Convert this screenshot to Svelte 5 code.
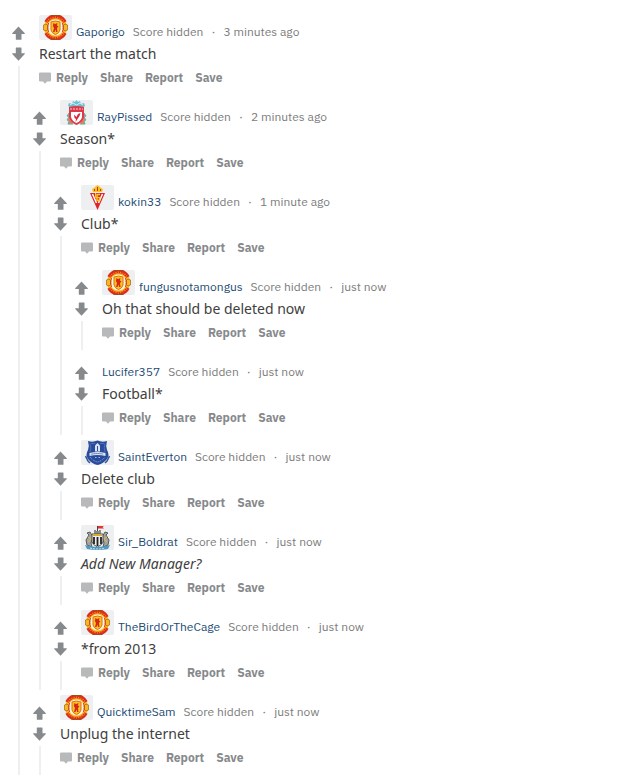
<script lang="ts">
    type Club = 'united' | 'liverpool' | 'gijon' | 'everton' | 'newcastle';

    interface Comment {
        author: string;
        age: string;
        text: string;
        club?: Club;
        italic?: boolean;
        replies?: Comment[];
    }

    const clubNames: Record<Club, string> = {
        united: 'Manchester United',
        liverpool: 'Liverpool',
        gijon: 'Sporting Gijón',
        everton: 'Everton',
        newcastle: 'Newcastle United'
    };

    const comments: Comment[] = [
        {
            author: 'Gaporigo', age: '3 minutes ago', text: 'Restart the match', club: 'united',
            replies: [
                {
                    author: 'RayPissed', age: '2 minutes ago', text: 'Season*', club: 'liverpool',
                    replies: [
                        {
                            author: 'kokin33', age: '1 minute ago', text: 'Club*', club: 'gijon',
                            replies: [
                                { author: 'fungusnotamongus', age: 'just now', text: 'Oh that should be deleted now', club: 'united' },
                                { author: 'Lucifer357', age: 'just now', text: 'Football*' }
                            ]
                        },
                        { author: 'SaintEverton', age: 'just now', text: 'Delete club', club: 'everton' },
                        { author: 'Sir_Boldrat', age: 'just now', text: 'Add New Manager?', club: 'newcastle', italic: true },
                        { author: 'TheBirdOrTheCage', age: 'just now', text: '*from 2013', club: 'united' }
                    ]
                },
                { author: 'QuicktimeSam', age: 'just now', text: 'Unplug the internet', club: 'united' }
            ]
        }
    ];

    let votes: Record<string, number> = $state({});

    function vote(author: string, dir: number) {
        votes[author] = votes[author] === dir ? 0 : dir;
    }
</script>

{#snippet crest(club: Club)}
    <svg class="crest" viewBox="0 0 25 25" aria-hidden="true">
        {#if club === 'united'}
            <circle cx="12.5" cy="12.5" r="11.5" fill="#f6b81c" />
            <circle cx="12.5" cy="12.5" r="8" fill="#fdf3df" />
            <path d="M3 7A10.800 10.800 0 0 1 22 7M3 18A10.800 10.800 0 0 0 22 18" fill="none" stroke="#dd2a18" stroke-width="3.600" />
            <path d="M4 6.500A10.500 10.500 0 0 1 21 6.500M4 18.500A10.500 10.500 0 0 0 21 18.500" fill="none" stroke="#f9942c" stroke-width="1.200" stroke-dasharray="1 1.300" />
            <path d="M7 1 9.500 0.300H15.500L18 1M7 24 9.500 24.700H15.500L18 24" fill="none" stroke="#8d5a1c" stroke-width="0.800" />
            <path d="M0.500 10 3 9 5 11V14L3 16 0.500 15ZM24.500 10 22 9 20 11V14L22 16 24.500 15Z" fill="#f9b91b" stroke="#a4611c" stroke-width="0.700" />
            <path d="M5.500 8Q3.500 12.500 5.500 17M19.500 8Q21.500 12.500 19.500 17" fill="none" stroke="#d5381c" stroke-width="1" />
            <path d="M8 7Q12.500 5 17 7V15Q16 18.500 12.500 19.500Q9 18.500 8 15Z" fill="#fac51c" stroke="#df6b1b" stroke-width="1" />
            <path d="M10.500 8 12 9 14.500 8 14 10.500 15.500 11.500 14 13 14.500 17H13L12.500 14.500 11.500 17H10L11 13 9.800 11Z" fill="#d5281a" />
        {:else if club === 'liverpool'}
            <path d="M4 6 5 3 8 4 9 1 11 2 12.500 0 14 2 16 1 17 4 20 3 21 6 18 8H7Z" fill="#6fbfd4" />
            <path d="M6 5 9 3 12.500 5 16 3 19 5" fill="none" stroke="#d3eef0" stroke-width="1" />
            <path d="M5 13 3 16 5 17 3 20 5 21 4 24H9M20 13 22 16 20 17 22 20 20 21 21 24H16" fill="#ef7c55" stroke="#57b3b6" stroke-width="1" />
            <path d="M5 7Q12.500 5 20 7V17Q19 22 12.500 25Q6 22 5 17Z" fill="#dc3a4a" />
            <path d="M6 9H19" stroke="#f9cbd0" stroke-width="1" stroke-dasharray="2 1" />
            <path d="M7 12H18V17Q17 21 12.500 23Q8 21 7 17Z" fill="#fff" />
            <path d="M16.500 13 14 14 12.500 17 10 14.500 10.500 18 12 19 11.500 22 13.500 19 15.500 16Z" fill="#d9293c" />
        {:else if club === 'gijon'}
            <path d="M8 7 7 4 9 3 10 2 12.500 0 15 2 16 3 18 4 17 7Z" fill="#f2c51d" />
            <path d="M9 4H10V6H9ZM12 2H13V6H12ZM15 4H16V6H15Z" fill="#d72329" />
            <path d="M5 8H20L12.500 25Z" fill="#e1222b" />
            <path d="M7.500 9 11.500 18M17.500 9 13.500 18" stroke="#fff" stroke-width="1.500" />
            <path d="M15 9.500H12V15.500H14.500V13" fill="none" stroke="#f4ca22" stroke-width="1.500" />
            <path d="M10.500 8V12.500H15.500" fill="none" stroke="#f4ca22" stroke-width="1" />
        {:else if club === 'everton'}
            <path d="M3 1Q8 2.500 12.500 0.500Q17 2.500 22 1Q20.500 6 22 10Q25 15 22 19Q18 24 12.500 25Q7 24 3 19Q0 15 3 10Q4.500 6 3 1Z" fill="#284c9b" />
            <path d="M5 3.500Q6.500 8 5 12M20 3.500Q18.500 8 20 12M6 3.500H10M15 3.500H19" fill="none" stroke="#6f88c1" stroke-width="0.600" />
            <path d="M10 11.500V5.500L12.500 3 15 5.500V11.500Z" fill="#dce4f3" />
            <path d="M12.500 6V11" fill="none" stroke="#2a4fa0" stroke-width="1" />
            <path d="M4.500 13Q12.500 11 20.500 13V16Q12.500 14 4.500 16Z" fill="#dbe3f2" />
            <path d="M6.500 14.200Q12.500 12.800 18.500 14.200" fill="none" stroke="#34589f" stroke-width="1" stroke-dasharray="1.200 0.800" />
            <path d="M5 17Q8 21 12.500 22Q17 21 20 17" fill="none" stroke="#a6b8dc" stroke-width="1" stroke-dasharray="1 1" />
            <path d="M10 17.500H11.500M13.500 17.500H15" stroke="#a6b8dc" stroke-width="1" />
            <path d="M0.500 16 3 21 5 23M24.500 16 22 21 20 23" fill="none" stroke="#34589f" stroke-width="1.500" />
        {:else}
            <path d="M12.500 7V1" stroke="#444" stroke-width="1" />
            <path d="M13 1H19L17.500 2 19 3.500H13Z" fill="#e5342d" />
            <path d="M9 9V5H11V6H14V5H16V9Z" fill="#888b8a" />
            <path d="M5 7 2 8 4 10 1 15 2 20 7 22 6 18 8 12ZM20 7 23 8 21 10 24 15 23 20 18 22 19 18 17 12Z" fill="#a2a3a0" stroke="#575b5c" stroke-width="1" />
            <path d="M3 12 6 14 3 17M22 12 19 14 22 17" fill="none" stroke="#e1b84b" stroke-width="1" />
            <path d="M7 9H18V17Q17 20 12.500 22Q8 20 7 17Z" fill="#eee" stroke="#555" stroke-width="1" />
            <path d="M9 12V19M12.500 12V21M16 12V19" stroke="#222" stroke-width="1.800" />
            <path d="M8 10H17" stroke="#d8ad36" stroke-width="2" />
            <path d="M0 20Q12.500 24 25 20L23 24Q12.500 26 2 24Z" fill="#4c9ac0" />
            <path d="M5 23Q12.500 25 20 23" fill="none" stroke="#c8e1ea" stroke-width="1" stroke-dasharray="2 1" />
        {/if}
    </svg>
{/snippet}

{#snippet thread(list: Comment[])}
    <ul class="thread">
        {#each list as comment (comment.author)}
            <li class="comment">
                <div class="rail">
                    <div class="votes">
                        <button class="vote" aria-label="Upvote" aria-pressed={votes[comment.author] === 1} onclick={() => vote(comment.author, 1)}>
                            <svg viewBox="0 0 14 14"><path d="M6.500 0.500 12.800 7.300V8H9.500V13.200Q9.500 13.700 9 13.700H4.300Q3.800 13.700 3.800 13.200V8H0.200V7.300Z" /></svg>
                        </button>
                        <button class="vote" aria-label="Downvote" aria-pressed={votes[comment.author] === -1} onclick={() => vote(comment.author, -1)}>
                            <svg viewBox="0 0 14 14"><path d="M6.500 13.700 12.800 6.900V6.200H9.500V1Q9.500 0.500 9 0.500H4.300Q3.800 0.500 3.800 1V6.200H0.200V6.900Z" /></svg>
                        </button>
                    </div>
                    <div class="line"></div>
                </div>
                <div class="main">
                    <article class="entry">
                        <header>
                            {#if comment.club}
                                <span class="flair" title={clubNames[comment.club]}>{@render crest(comment.club)}</span>
                            {/if}
                            <a class="author" href="#{comment.author}">{comment.author}</a>
                            <span class="score">Score hidden</span>
                            <span class="dot">·</span>
                            <span class="age">{comment.age}</span>
                        </header>
                        <p class:italic={comment.italic}>{comment.text}</p>
                        <div class="actions">
                            <button class="reply">
                                <svg viewBox="0 0 12 12"><path d="M1 0.500H11Q12 0.500 12 1.500V8.500Q12 9.500 11 9.500H8L6 11.700 4 9.500H1Q0 9.500 0 8.500V1.500Q0 0.500 1 0.500Z" /></svg>
                                Reply
                            </button>
                            <button>Share</button>
                            <button>Report</button>
                            <button>Save</button>
                        </div>
                    </article>
                    {#if comment.replies}
                        {@render thread(comment.replies)}
                    {/if}
                </div>
            </li>
        {/each}
    </ul>
{/snippet}

<main>
    {@render thread(comments)}
</main>

<style>
    :global(body) {
        margin: 0;
        background: #fff;
    }
    main {
        padding: 10px 12px 4px;
        font-family: 'IBM Plex Sans', 'Open Sans', sans-serif;
        font-size: 12px;
        line-height: 16px;
        color: #7c7c7c;
    }
    .thread {
        list-style: none;
        margin: 0;
        padding: 0;
    }
    .comment {
        display: grid;
        grid-template-columns: 14px minmax(0, 1fr);
        column-gap: 7px;
    }
    button {
        padding: 0;
        border: none;
        background: none;
        font: inherit;
        color: inherit;
        cursor: pointer;
    }
    svg {
        display: block;
    }
    .rail {
        display: flex;
        flex-direction: column;
        align-items: center;
        gap: 5px;
        padding-top: 16px;
    }
    .votes {
        display: grid;
        gap: 7px;
    }
    .vote {
        width: 14px;
        height: 14px;
        fill: #878a8c;
    }
    .vote[aria-pressed='true'] {
        fill: #ff4500;
    }
    .line {
        flex: 1;
        width: 2px;
        background: #edeff1;
    }
    .entry {
        padding: 5px 0 9px 6px;
    }
    header {
        display: flex;
        align-items: flex-end;
        height: 25px;
        white-space: nowrap;
    }
    .flair {
        display: flex;
        justify-content: center;
        width: 33px;
        height: 25px;
        margin-right: 4px;
        border-radius: 2px;
        background: #edeff1;
    }
    .crest {
        width: 25px;
        height: 25px;
    }
    .author {
        margin-right: 8px;
        color: #1c4b75;
        text-decoration: none;
    }
    .author:hover {
        text-decoration: underline;
    }
    .dot {
        width: 20px;
        text-align: center;
    }
    p {
        margin: 3px 0 6px;
        font-family: 'Noto Sans', sans-serif;
        font-size: 14px;
        line-height: 21px;
        color: #404040;
    }
    .italic {
        font-style: italic;
    }
    .actions {
        display: flex;
        gap: 12px;
        font-weight: 700;
        color: #878a8c;
    }
    .reply {
        display: flex;
        align-items: center;
        gap: 5px;
    }
    .reply svg {
        width: 12px;
        height: 12px;
        fill: #b7b9ba;
    }
</style>
